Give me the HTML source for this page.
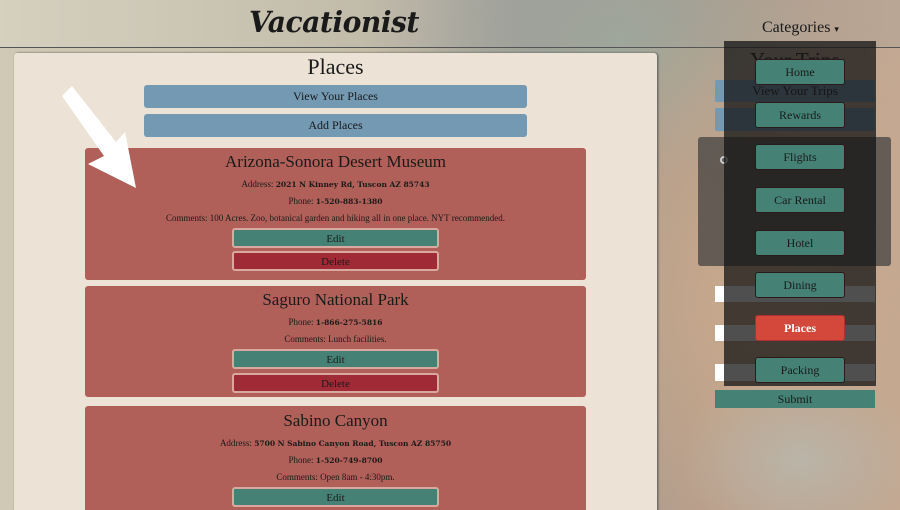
<!DOCTYPE html>
<html><head><meta charset="utf-8">
<style>
*{box-sizing:border-box;margin:0;padding:0}
html{width:900px;height:510px;overflow:hidden}
body{width:900px;height:510px;overflow:hidden;position:relative;font-family:"Liberation Serif",serif;color:#1a1a1a;
background:
radial-gradient(ellipse 120px 90px at 800px 460px,#b9b4a8 0%,rgba(185,180,168,0) 100%),
radial-gradient(ellipse 260px 300px at 760px 300px,#c7a98c 0%,rgba(199,169,140,0) 100%),
radial-gradient(ellipse 200px 150px at 620px 40px,#9fa89a 0%,rgba(159,168,154,0) 100%),
linear-gradient(90deg,#cfc9b5 0%,#c8bfa7 40%,#9b9a95 60%,#b79c8a 80%,#c3a893 100%);}
.abs{position:absolute}
.btn{position:absolute;text-align:center;border-radius:3px;display:flex;align-items:center;justify-content:center}
.card{position:absolute;left:85px;width:501px;background:#b06058;border-radius:3px;text-align:center}
.t{font-size:17px;line-height:20px}
.s{font-size:9px;line-height:10px}
.s b{font-family:"DejaVu Serif",serif;font-size:7.5px}
.e{left:232px;width:207px;height:20px;background:#458275;border:2px solid #d9a9a0;font-size:11px;padding-top:1px}
.d{left:232px;width:207px;height:20px;background:#a02a35;border:2px solid #d9a9a0;font-size:11px;padding-top:1px}
.m{left:755px;width:90px;height:26px;background:#458275;border:1px solid #2a1a1a;font-size:12px}
</style></head><body>
<div class="abs" style="left:0;top:0;width:900px;height:47px;background:linear-gradient(90deg,rgba(220,215,200,.5),rgba(160,160,160,.3) 55%,rgba(150,160,150,.2))"></div>
<div class="abs" style="left:249px;top:5px;font-size:29px;font-style:italic;font-weight:bold;font-family:'DejaVu Serif',serif;letter-spacing:-0.5px;transform:scaleX(0.97);transform-origin:left">Vacationist</div>
<div class="abs" style="left:0;top:47px;width:900px;height:1px;background:#555"></div>
<div class="abs" style="left:762px;top:19px;font-size:16px">Categories <span style="font-size:9px">▾</span></div>

<div class="abs" style="left:750px;top:48px;font-size:21px">Your Trips</div>
<div class="abs" style="left:715px;top:80px;width:160px;height:22px;background:#7399b3;border-radius:2px;text-align:center;font-size:13px;line-height:22px">View Your Trips</div>
<div class="abs" style="left:715px;top:108px;width:160px;height:23px;background:#7399b3;border-radius:2px"></div>
<div class="abs" style="left:698px;top:137px;width:193px;height:129px;background:rgba(60,60,60,.7);border-radius:3px"></div>
<div class="abs" style="left:720px;top:156px;width:8px;height:8px;border:2px solid #ccc;border-radius:50%"></div>
<div class="abs" style="left:715px;top:286px;width:160px;height:16px;background:#fff"></div>
<div class="abs" style="left:715px;top:325px;width:160px;height:16px;background:#fff"></div>
<div class="abs" style="left:715px;top:364px;width:160px;height:17px;background:#fff"></div>
<div class="abs" style="left:715px;top:390px;width:160px;height:18px;background:#458275;text-align:center;font-size:12px;line-height:18px">Submit</div>
<div class="abs" style="left:724px;top:41px;width:152px;height:345px;background:rgba(20,20,20,.75)"></div>
<div class="btn m" style="top:59px">Home</div>
<div class="btn m" style="top:102px">Rewards</div>
<div class="btn m" style="top:144px">Flights</div>
<div class="btn m" style="top:187px">Car Rental</div>
<div class="btn m" style="top:230px">Hotel</div>
<div class="btn m" style="top:272px">Dining</div>
<div class="btn m" style="top:315px;background:#d4483c;border-color:#b03030;color:#fff;font-weight:bold">Places</div>
<div class="btn m" style="top:357px">Packing</div>

<div class="abs" style="left:14px;top:53px;width:643px;height:470px;background:#ece2d6;border-radius:3px;box-shadow:1px 0 2px #555"></div>
<div class="abs" style="left:14px;top:54px;width:643px;text-align:center;font-size:22px">Places</div>
<div class="btn" style="left:144px;top:85px;width:383px;height:23px;background:#7399b3;font-size:12px">View Your Places</div>
<div class="btn" style="left:144px;top:114px;width:383px;height:23px;background:#7399b3;font-size:12px">Add Places</div>

<div class="card" style="top:148px;height:132px">
<div class="t" style="margin-top:4px">Arizona-Sonora Desert Museum</div>
<div class="s" style="margin-top:7px">Address: <b>2021 N Kinney Rd, Tuscon AZ 85743</b></div>
<div class="s" style="margin-top:6px">Phone: <b>1-520-883-1380</b></div>
<div class="s" style="margin-top:6px">Comments: 100 Acres. Zoo, botanical garden and hiking all in one place. NYT recommended.</div>
</div>
<div class="btn e" style="top:228px">Edit</div>
<div class="btn d" style="top:251px">Delete</div>

<div class="card" style="top:286px;height:111px">
<div class="t" style="margin-top:4px">Saguro National Park</div>
<div class="s" style="margin-top:7px">Phone: <b>1-866-275-5816</b></div>
<div class="s" style="margin-top:6px">Comments: Lunch facilities.</div>
</div>
<div class="btn e" style="top:349px">Edit</div>
<div class="btn d" style="top:373px">Delete</div>

<div class="card" style="top:406px;height:120px">
<div class="t" style="margin-top:5px">Sabino Canyon</div>
<div class="s" style="margin-top:7px">Address: <b>5700 N Sabino Canyon Road, Tuscon AZ 85750</b></div>
<div class="s" style="margin-top:6px">Phone: <b>1-520-749-8700</b></div>
<div class="s" style="margin-top:6px">Comments: Open 8am - 4:30pm.</div>
</div>
<div class="btn e" style="top:487px">Edit</div>

<svg class="abs" style="left:0;top:0" width="200" height="200" viewBox="0 0 200 200">
<polygon points="62,96 72,86 116,142 125,132 136,188 88,164 104,156" fill="#fff"/>
</svg>
</body></html>
